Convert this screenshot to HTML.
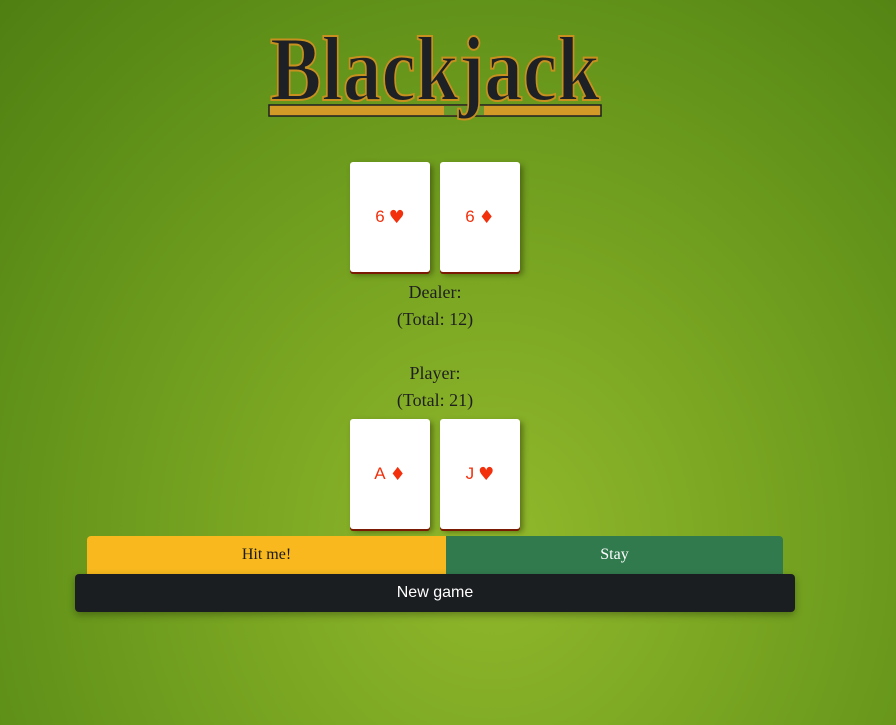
<!DOCTYPE html>
<html><head><style>
html,body{margin:0;width:896px;height:725px;overflow:hidden}
body{background:radial-gradient(ellipse at 55% 75%,#92b92c 0%,#7aa622 35%,#5e8f18 75%,#4f7f12 100%);font-family:"Liberation Serif",serif;position:relative}
.title{position:absolute;left:268px;top:18px;width:334px;height:110px}
.card{position:absolute;width:80px;height:110px;background:#fff;border-radius:3px;box-shadow:0 2px 0 #7a1a05,3px 3px 6px rgba(40,50,0,.5);color:#f2300c;font-family:"Liberation Sans","DejaVu Sans",sans-serif;font-size:17px;display:flex;align-items:center;justify-content:center}
.card span{font-size:18px;margin-left:4px;font-family:"DejaVu Sans",sans-serif}
.t{position:absolute;left:0;width:870px;text-align:center;font-size:18px;color:#1f1f1f}
.btn{position:absolute;display:flex;align-items:center;justify-content:center;font-size:16px}
</style></head><body>
<svg class="title" viewBox="0 0 334 110">
<rect x="1" y="87" width="332" height="11" fill="#d49a28" stroke="#1c1f22" stroke-width="1.5"/>
<rect x="176" y="88" width="40" height="9" fill="#6a9a2a"/>
<text x="167" y="82" text-anchor="middle" font-family="Liberation Serif" font-weight="bold" font-size="92" fill="#1d2126" stroke="#c8901e" stroke-width="2" textLength="330" lengthAdjust="spacingAndGlyphs">Blackjack</text>
</svg>
<div class="card" style="left:350px;top:162px">6<span>♥</span></div>
<div class="card" style="left:440px;top:162px">6<span>♦</span></div>
<div class="t" style="top:282px">Dealer:</div>
<div class="t" style="top:309px">(Total: 12)</div>
<div class="t" style="top:363px">Player:</div>
<div class="t" style="top:390px">(Total: 21)</div>
<div class="card" style="left:350px;top:419px">A<span>♦</span></div>
<div class="card" style="left:440px;top:419px">J<span>♥</span></div>
<div class="btn" style="left:87px;top:536px;width:359px;height:38px;background:#f8b81e;color:#1a1a1a;border-radius:4px 0 0 0">Hit me!</div>
<div class="btn" style="left:446px;top:536px;width:337px;height:38px;background:#317a4e;color:#fff;border-radius:0 4px 0 0">Stay</div>
<div class="btn" style="left:75px;top:574px;width:720px;height:38px;background:#1b1e21;color:#fff;border-radius:4px;font-family:'Liberation Sans',sans-serif;box-shadow:0 3px 8px rgba(0,0,0,.3)">New game</div>
</body></html>
